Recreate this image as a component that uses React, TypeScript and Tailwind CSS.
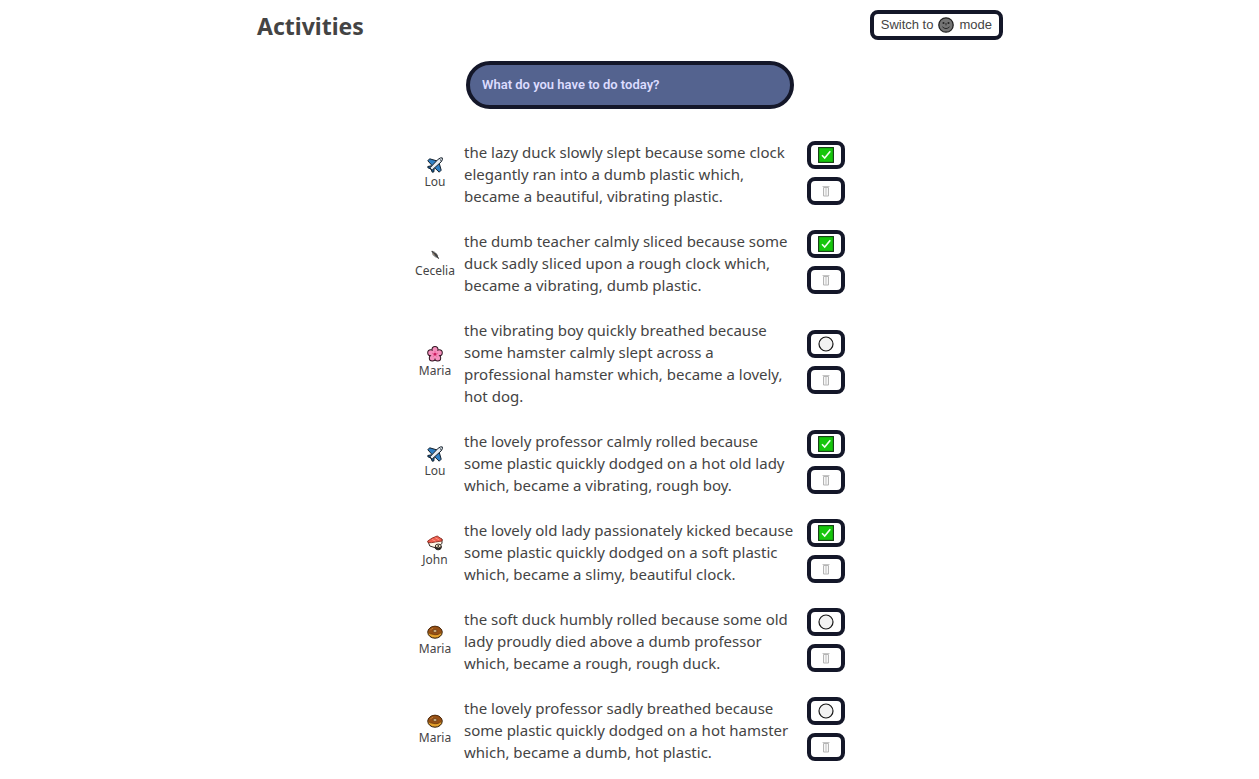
import { useState } from "react";

type IconName = "plane" | "feather" | "flower" | "sushi" | "doughnut";
type Activity = { icon: IconName; user: string; lines: string[]; done: boolean };

const initialActivities: Activity[] = [
  { icon: "plane", user: "Lou", done: true, lines: ["the lazy duck slowly slept because some clock", "elegantly ran into a dumb plastic which,", "became a beautiful, vibrating plastic."] },
  { icon: "feather", user: "Cecelia", done: true, lines: ["the dumb teacher calmly sliced because some", "duck sadly sliced upon a rough clock which,", "became a vibrating, dumb plastic."] },
  { icon: "flower", user: "Maria", done: false, lines: ["the vibrating boy quickly breathed because", "some hamster calmly slept across a", "professional hamster which, became a lovely,", "hot dog."] },
  { icon: "plane", user: "Lou", done: true, lines: ["the lovely professor calmly rolled because", "some plastic quickly dodged on a hot old lady", "which, became a vibrating, rough boy."] },
  { icon: "sushi", user: "John", done: true, lines: ["the lovely old lady passionately kicked because", "some plastic quickly dodged on a soft plastic", "which, became a slimy, beautiful clock."] },
  { icon: "doughnut", user: "Maria", done: false, lines: ["the soft duck humbly rolled because some old", "lady proudly died above a dumb professor", "which, became a rough, rough duck."] },
  { icon: "doughnut", user: "Maria", done: false, lines: ["the lovely professor sadly breathed because", "some plastic quickly dodged on a hot hamster", "which, became a dumb, hot plastic."] },
];

function UserIcon({ name }: { name: IconName }) {
  return (
    <svg viewBox="0 0 16 16" className="size-4" aria-hidden="true">
      {name === "plane" && (
        <g stroke="#15202b" strokeWidth="1" strokeLinejoin="round">
          <path d="M.8 3.8 2.6 1.8 11 4.2 6 9.5Z" fill="#2f7fc4" />
          <path d="M14.2 13.2 12.2 15.2 6.8 10 11.8 4.8Z" fill="#2f7fc4" />
          <path d="M.8 9.5 4.5 8.8 7.2 11.5 6.8 15 5.2 15.2 4 12 .9 10.8Z" fill="#1769ad" />
          <path d="M3.2 10.6 11.2 2.2Q13.8.2 15.3.9 16.1 2.6 14 5L5.4 12.8Q3.6 13.3 3.2 10.6Z" fill="#e8edf2" />
          <path d="m12.8 2.4 1.5 1.4" />
        </g>
      )}
      {name === "feather" && (
        <g>
          <path d="M4.5 4.8 7.4 5.6 10.2 8.2 11.4 12 8.6 11.4 5.6 9Z" fill="#868686" />
          <path d="m4.8 5 7 7.6M7 7.2 9.8 8.6M8.8 9.2l2.2 1" stroke="#3d3d3d" strokeWidth="1.1" fill="none" />
          <path d="m6 8 1.3.4" stroke="#b3906c" strokeWidth=".9" />
        </g>
      )}
      {name === "flower" && (
        <g>
          <g fill="#f48fbd" stroke="#30131f" strokeWidth="2">
            <circle cx="8" cy="3.6" r="2.5" />
            <circle cx="12.3" cy="6.8" r="2.5" />
            <circle cx="10.7" cy="11.9" r="2.5" />
            <circle cx="5.3" cy="11.9" r="2.5" />
            <circle cx="3.7" cy="6.8" r="2.5" />
          </g>
          <g fill="#f48fbd">
            <circle cx="8" cy="3.6" r="2.5" />
            <circle cx="12.3" cy="6.8" r="2.5" />
            <circle cx="10.7" cy="11.9" r="2.5" />
            <circle cx="5.3" cy="11.9" r="2.5" />
            <circle cx="3.7" cy="6.8" r="2.5" />
            <circle cx="8" cy="8.2" r="4" />
          </g>
          <path d="M8 8.2V5M8 8.2l3-1M8 8.2l1.9 2.6M8 8.2l-1.9 2.6M8 8.2l-3-1" stroke="#e8558f" strokeWidth=".8" />
          <circle cx="8" cy="8.2" r="1.3" fill="#c9185c" />
        </g>
      )}
      {name === "sushi" && (
        <g stroke="#221714" strokeWidth=".9" strokeLinejoin="round">
          <path d="M1 6.5 2.8 11 9 13 15 8.5 15 4Z" fill="#fff8e8" />
          <path d="M.7 6Q4.5 2.8 10.2 1L15 4.2 15 6 8.4 7Q4.5 8 1 7.6Z" fill="#ee5b4c" stroke="#8d2c20" />
          <path d="m5 4.4 3.5 1.8M8.3 2.8l4 2.2" stroke="#ff9e8c" />
          <path d="M8.4 11v2.6C9.4 15.3 13.2 15.2 14.2 13.2V11Z" fill="#252a25" />
          <ellipse cx="11.3" cy="11" rx="2.9" ry="1.9" fill="#fff3d4" />
          <circle cx="11.3" cy="11" r=".6" fill="#50652c" />
        </g>
      )}
      {name === "doughnut" && (
        <g stroke="#251407" strokeWidth="1">
          <ellipse cx="8" cy="8.2" rx="7.2" ry="6" fill="#e3a02c" />
          <path d="M1.2 7.6C2 .7 14 .7 14.8 7.6 14.3 9.2 12.8 9.4 11.5 10.2 9.5 10.9 7 10.9 5 10.1 3 10 1.7 9 1.2 7.6Z" fill="#965016" stroke="#613109" strokeWidth=".7" />
          <ellipse cx="8" cy="7" rx="2" ry="1.2" fill="#fbe2ac" stroke="#5b300c" strokeWidth=".8" />
          <path d="M3.3 6.2Q4.3 4.6 6.2 4.1" fill="none" stroke="#c58139" />
        </g>
      )}
    </svg>
  );
}

function StatusIcon({ done }: { done: boolean }) {
  return (
    <svg viewBox="0 0 16 16" className="size-4" aria-hidden="true">
      {done ? (
        <>
          <rect x=".6" y=".6" width="14.8" height="14.8" fill="#16c60c" stroke="#123b12" strokeWidth="1.1" />
          <path d="m4 8.3 2.7 2.8 5.6-6.8" fill="none" stroke="#f2fff0" strokeWidth="1.6" />
        </>
      ) : (
        <circle cx="8" cy="8" r="7" fill="#f2f2f2" stroke="#161616" strokeWidth="1.2" />
      )}
    </svg>
  );
}

function TrashIcon() {
  return (
    <svg viewBox="0 0 16 16" className="size-4" aria-hidden="true">
      <path d="M5.5 4.5h5v8.5h-5Z" fill="#f6f6f6" stroke="#b5b5b5" strokeWidth="1" />
      <path d="M4.5 3.5h7" stroke="#c4c4c4" />
      <path d="M8 5v7.5" fill="none" stroke="#c2c2c2" strokeWidth="1" />
    </svg>
  );
}

function MoonFace() {
  return (
    <svg viewBox="0 0 16 16" className="size-4" aria-hidden="true">
      <circle cx="8" cy="8" r="7.2" fill="#747474" stroke="#222" strokeWidth="1.3" />
      <path d="M8 6v2.4M4.4 9.8Q8 13.4 11.6 9.8" fill="none" stroke="#2a2a2a" strokeWidth="1" />
      <circle cx="5.5" cy="6" r="1" fill="#222" />
      <circle cx="10.5" cy="6" r="1" fill="#222" />
    </svg>
  );
}

const actionClass =
  "flex h-7 w-full items-center justify-center rounded-lg border-4 border-[#141729] bg-white";

export default function App() {
  const [activities, setActivities] = useState(initialActivities);

  const toggle = (index: number) =>
    setActivities(activities.map((a, i) => (i === index ? { ...a, done: !a.done } : a)));
  const remove = (index: number) => setActivities(activities.filter((_, i) => i !== index));

  return (
    <div className="bg-white pt-2.5 pr-4 pb-4 pl-[17px] font-['Noto_Sans',sans-serif] text-[#444]">
      <header className="mx-auto flex max-w-[746px] items-start justify-between">
        <h1 className="text-[23px] leading-8 font-bold">Activities</h1>
        <button
          type="button"
          className="flex h-[30px] items-center gap-[5px] rounded-lg border-4 border-[#141729] bg-white px-[7px] font-['Liberation_Sans',sans-serif] text-[13px]"
        >
          Switch to <MoonFace /> mode
        </button>
      </header>
      <main>
        <form className="mx-auto mt-[19px] max-w-[328px]" onSubmit={(e) => e.preventDefault()}>
          <input
            type="text"
            aria-label="New activity"
            placeholder="What do you have to do today?"
            className="block h-12 w-full rounded-full border-4 border-[#141729] bg-[#54638f] px-3 pb-0.5 font-['Roboto',sans-serif] text-[13px] font-semibold text-[#dcdcff] placeholder:text-[#dcdcff] placeholder:opacity-100"
          />
        </form>
        <ul className="mx-auto mt-8 flex max-w-[430px] flex-col gap-[23px]">
          {activities.map((activity, index) => (
            <li key={index} className="flex items-center">
              <div className="flex w-10 shrink-0 flex-col items-center">
                <UserIcon name={activity.icon} />
                <span className="text-[12px] leading-[18px]">{activity.user}</span>
              </div>
              <p className="ml-[9px] min-w-0 flex-1 text-[15px] leading-[22px] whitespace-pre-line">
                {activity.lines.join("\n")}
              </p>
              <div className="ml-1 flex w-[38px] shrink-0 flex-col gap-2 pb-0.5">
                <button type="button" aria-label="Toggle done" className={actionClass} onClick={() => toggle(index)}>
                  <StatusIcon done={activity.done} />
                </button>
                <button type="button" aria-label="Delete" className={actionClass} onClick={() => remove(index)}>
                  <TrashIcon />
                </button>
              </div>
            </li>
          ))}
        </ul>
      </main>
    </div>
  );
}
